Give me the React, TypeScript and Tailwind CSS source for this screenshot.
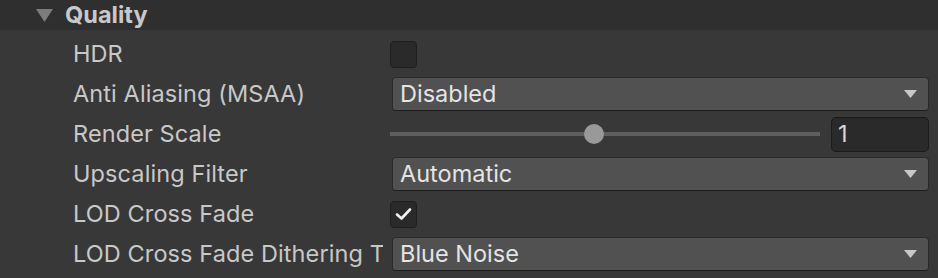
import React from "react";

const Arrow = () => (
  <svg width="13" height="8" viewBox="0 0 13 8" className="shrink-0">
    <polygon points="0,0 13,0 6.5,8" fill="#c8c8c8" />
  </svg>
);

const Dropdown = ({ value }: { value: string }) => (
  <div className="ml-[2px] flex h-[34px] flex-1 items-center justify-between rounded-[4px] border border-[#2a2a2a] border-b-[#1e1e1e] bg-[#515151] pl-[7px] pr-[11px] text-[23.5px] text-[#e4e4e4]">
    <span>{value}</span>
    <Arrow />
  </div>
);

const Checkbox = ({ checked }: { checked?: boolean }) => (
  <div className="flex h-[27px] w-[27px] items-center justify-center rounded-[4px] border border-[#1e1e1e] bg-[#2a2a2a]">
    {checked && (
      <svg width="17" height="14" viewBox="0 0 17 14">
        <path d="M2 7.5 L6.5 11.5 L15 2.5" fill="none" stroke="#f0f0f0" strokeWidth="2.6" strokeLinecap="round" strokeLinejoin="round" />
      </svg>
    )}
  </div>
);

const Row = ({ label, children }: { label: string; children: React.ReactNode }) => (
  <div className="flex h-[40px] items-center">
    <div className="w-[310px] shrink-0 overflow-hidden whitespace-nowrap text-[23.5px] tracking-[0.1px] text-[#c8c8c8]">{label}</div>
    <div className="ml-[7px] flex flex-1 items-center">{children}</div>
  </div>
);

export default function App() {
  return (
    <div className="h-[278px] w-[938px] bg-[#383838] [font-family:Inter,'Noto_Sans',sans-serif]">
      <div className="flex h-[30px] items-center bg-[#2f2f2f] pl-[36px]">
        <svg width="17" height="13" viewBox="0 0 17 13" className="mr-[12px] mt-[1px]">
          <polygon points="0,0 17,0 8.5,13" fill="#7c7c7c" />
        </svg>
        <span className="text-[23.5px] font-bold text-[#c8c8c8]">Quality</span>
      </div>
      <div className="pl-[73px] pr-[9px] pt-[4px]">
        <Row label="HDR">
          <Checkbox />
        </Row>
        <Row label="Anti Aliasing (MSAA)">
          <Dropdown value="Disabled" />
        </Row>
        <Row label="Render Scale">
          <div className="relative flex h-[20px] w-[430px] items-center">
            <div className="h-[4px] w-full bg-[#5e5e5e]" />
            <div className="absolute left-[194px] top-0 h-[20px] w-[20px] rounded-full bg-[#999999]" />
          </div>
          <div className="ml-[11px] flex h-[35px] flex-1 items-center rounded-[5px] border border-[#1a1a1a] bg-[#2a2a2a] pl-[6px] text-[23.5px] text-[#d8d8d8]">
            1
          </div>
        </Row>
        <Row label="Upscaling Filter">
          <Dropdown value="Automatic" />
        </Row>
        <Row label="LOD Cross Fade">
          <Checkbox checked />
        </Row>
        <Row label="LOD Cross Fade Dithering Type">
          <Dropdown value="Blue Noise" />
        </Row>
      </div>
    </div>
  );
}
